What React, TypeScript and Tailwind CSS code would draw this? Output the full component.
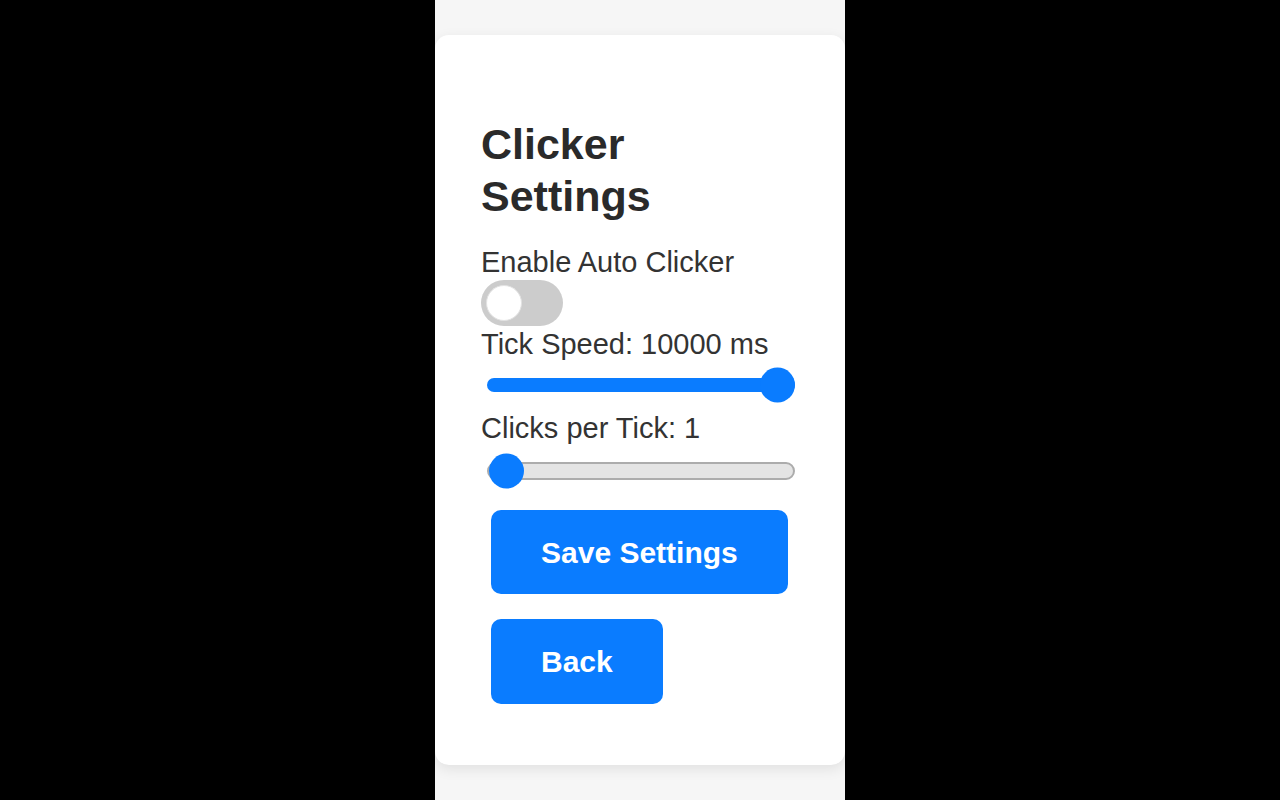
import React from "react";

function Slider({ pos, filled }: { pos: number; filled: boolean }) {
  return (
    <div className="h-[50px] flex items-center">
      <div
        className={
          filled
            ? "relative ml-[6px] w-[308px] h-[14px] rounded-full bg-[#0a7cff]"
            : "relative ml-[6px] w-[308px] h-[18px] rounded-full bg-[#e4e4e4] border-2 border-[#acacac]"
        }
      >
        <div
          className="absolute top-1/2 -translate-y-1/2 w-[35px] h-[35px] rounded-full bg-[#0a7cff]"
          style={{ left: `calc(${pos} * (100% - 35px))` }}
        />
      </div>
    </div>
  );
}

export default function App() {
  return (
    <div
      className="w-full h-[800px] bg-black flex justify-center overflow-hidden"
      style={{ fontFamily: '"Liberation Sans", Arial, sans-serif' }}
    >
      <div className="w-[410px] h-full bg-[#f6f6f6] pt-[35px]">
        <div className="bg-white rounded-[14px] shadow-[0_4px_14px_rgba(0,0,0,0.09)] pt-[83px] pb-[61px] pl-[46px] pr-[47px]">
          <h2 className="text-[43px] leading-[52px] font-bold text-[#2a2a2a] max-w-[300px]">
            Clicker Settings
          </h2>
          <div className="mt-[24px] text-[29px] leading-[32px] text-[#333]">Enable Auto Clicker</div>
          <div className="mt-[2px] w-[82px] h-[46px] rounded-full bg-[#cccccc] flex items-center pl-[5px]">
            <div className="w-[36px] h-[36px] rounded-full bg-white border border-[#e2e2e2]" />
          </div>
          <div className="mt-[2px] text-[29px] leading-[32px] text-[#333]">Tick Speed: 10000 ms</div>
          <Slider pos={1} filled={true} />
          <div className="mt-[2px] text-[29px] leading-[32px] text-[#333]">Clicks per Tick: 1</div>
          <div className="mt-[2px]">
            <Slider pos={0} filled={false} />
          </div>
          <div className="mt-[14px] flex flex-col items-start gap-[25px]">
            <button className="ml-[10px] h-[84px] px-[50px] rounded-[10px] bg-[#0a7cff] text-white text-[30px] font-bold flex items-center">
              Save Settings
            </button>
            <button className="ml-[10px] h-[85px] px-[50px] rounded-[10px] bg-[#0a7cff] text-white text-[30px] font-bold flex items-center">
              Back
            </button>
          </div>
        </div>
      </div>
    </div>
  );
}
